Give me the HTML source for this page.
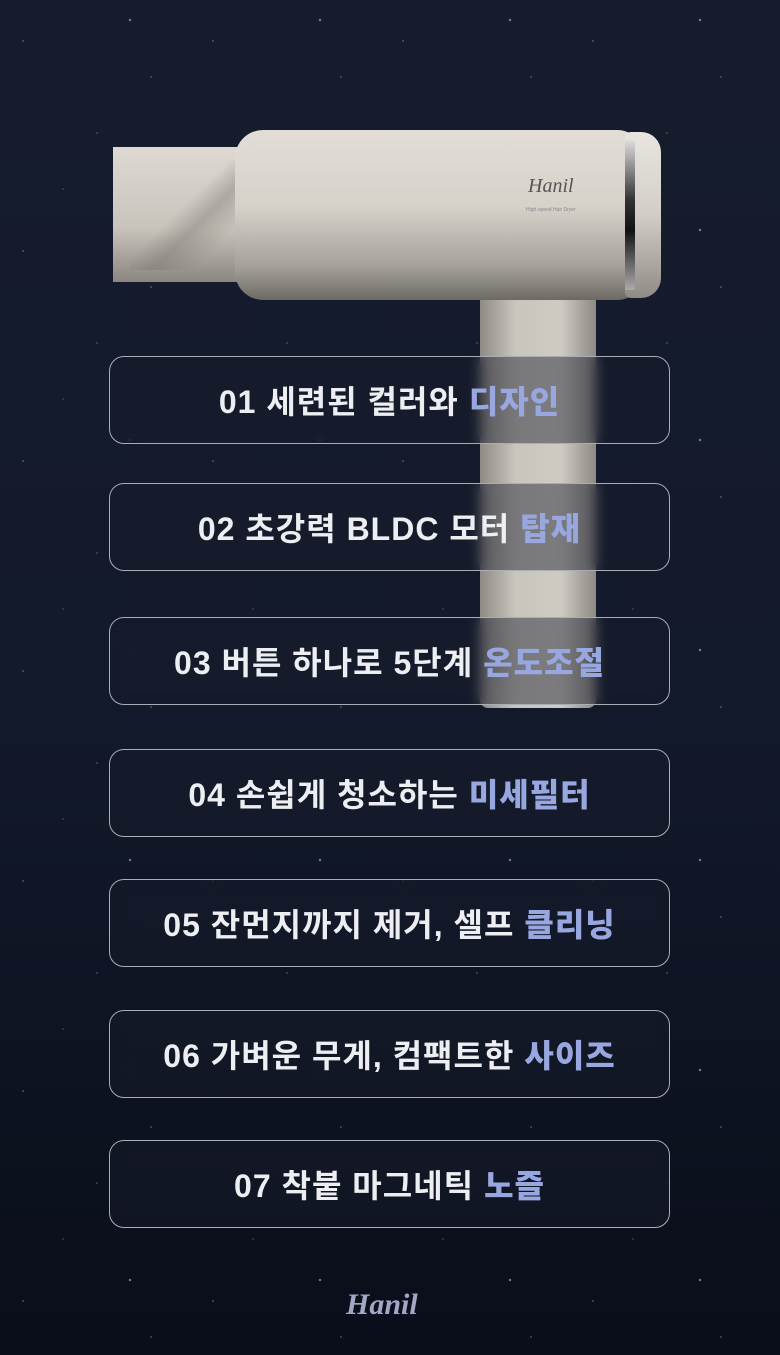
<!DOCTYPE html>
<html><head><meta charset="utf-8"><style>
*{margin:0;padding:0;box-sizing:border-box}
body{width:780px;height:1355px;overflow:hidden;background:linear-gradient(#161c2d 0%,#131a2b 50%,#0a0e1a 100%);position:relative;font-family:"Liberation Sans","Noto Sans CJK KR",sans-serif}
.stars{position:absolute;inset:0;background-image:radial-gradient(1px 1px at 23px 41px,#8a94b0 50%,transparent),radial-gradient(1px 1px at 97px 133px,#6a7490 50%,transparent),radial-gradient(1px 1px at 151px 77px,#7a84a0 50%,transparent),radial-gradient(1px 1px at 63px 189px,#5a6480 50%,transparent),radial-gradient(1.5px 1.5px at 130px 20px,#9aa4c0 50%,transparent);background-size:190px 210px;opacity:.8}
.abs{position:absolute}
.box{position:absolute;left:109px;width:561px;height:88px;border:1.5px solid #a9adb8;border-radius:15px;background:rgba(24,29,45,.45);backdrop-filter:blur(6px);display:flex;align-items:center;justify-content:center;color:#eceef2;font-weight:bold;font-size:32px;letter-spacing:1px}
.box b{color:#98a7e0;margin-left:10px}
</style></head><body>
<div class="stars"></div>
<div class="abs" style="left:480px;top:290px;width:116px;height:418px;border-radius:0 0 8px 8px;background:linear-gradient(90deg,#8e8a84,#c9c5bd 30%,#cfcac2 70%,#8d8983)"></div>
<div class="abs" style="left:113px;top:147px;width:130px;height:135px;background:linear-gradient(180deg,#dedad3,#c8c4bc 60%,#8b8780)"></div>
<div class="abs" style="left:130px;top:160px;width:110px;height:110px;background:linear-gradient(135deg,transparent 45%,rgba(120,115,108,.4) 60%,transparent 80%)"></div>
<div class="abs" style="left:235px;top:130px;width:410px;height:170px;border-radius:28px;background:linear-gradient(180deg,#e2ded7 0%,#d6d2ca 45%,#a6a29b 80%,#6d6a65 100%)"></div>
<div class="abs" style="left:625px;top:132px;width:36px;height:166px;border-radius:6px 20px 20px 6px;background:linear-gradient(180deg,#e8e5e0,#d2cec7 50%,#8f8b85)"></div>
<div class="abs" style="left:625px;top:140px;width:10px;height:150px;background:linear-gradient(180deg,#ddd,#333 40%,#111 60%,#aaa)"></div>
<div class="abs" style="left:528px;top:175px;font-family:'Liberation Serif',serif;font-style:italic;font-size:20px;color:#555">Hanil</div>
<div class="abs" style="left:526px;top:207px;font-size:5px;color:#888">High-speed Hair Dryer</div>
<div class="box" style="top:356px">01 세련된 컬러와<b>디자인</b></div>
<div class="box" style="top:483px">02 초강력 BLDC 모터<b>탑재</b></div>
<div class="box" style="top:617px">03 버튼 하나로 5단계<b>온도조절</b></div>
<div class="box" style="top:749px">04 손쉽게 청소하는<b>미세필터</b></div>
<div class="box" style="top:879px">05 잔먼지까지 제거, 셀프<b>클리닝</b></div>
<div class="box" style="top:1010px">06 가벼운 무게, 컴팩트한<b>사이즈</b></div>
<div class="box" style="top:1140px">07 착붙 마그네틱<b>노즐</b></div>
<div class="abs" style="left:346px;top:1288px;font-family:'Liberation Serif',serif;font-style:italic;font-weight:bold;font-size:30px;color:#a3a6c4">Hanil</div>
</body></html>
